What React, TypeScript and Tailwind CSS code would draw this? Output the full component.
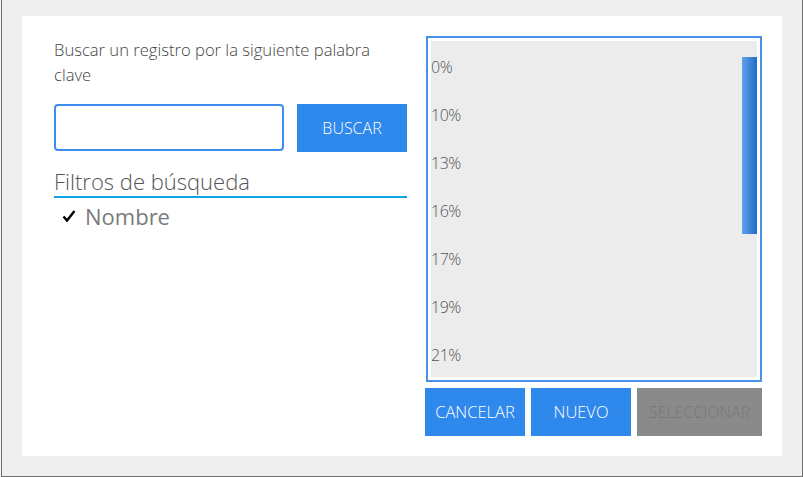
const items = ["0%", "10%", "13%", "16%", "17%", "19%", "21%"]

const Check = () => (
    <svg width="14" height="14" viewBox="0 0 14 14" className="shrink-0">
        <path d="M1.5 7.5 L5 11.5 L12.5 2" fill="none" stroke="#000" strokeWidth="2.4" />
    </svg>
)

const App = () => {
    return (
        <div className="w-[803px] h-[477px] bg-[#f5f5f5] pl-[1px] font-['Open_Sans',sans-serif]">
            <div className="h-full border-l border-r border-b border-[#6e6e6e] bg-[#efefef] pl-[20px] pt-[16px] pr-[19px] pb-[19px]">
                <div className="h-[440px] w-[760px] bg-white flex pl-[32px] pt-[20px] pr-[20px] pb-[20px] gap-[18px]">
                    {/* left column */}
                    <div className="w-[353px] flex flex-col">
                        <p className="text-[16.6px] leading-[25px] font-light text-[#444] pt-[1px] pr-[20px]">
                            Buscar un registro por la siguiente palabra clave
                        </p>
                        <div className="flex gap-[13px] mt-[17px]">
                            <input className="w-[230px] h-[47px] border-2 border-[#3d8cf0] rounded-[4px] outline-none px-2" />
                            <button className="w-[110px] h-[48px] bg-[#2f88ec] text-white font-light text-[16px]">BUSCAR</button>
                        </div>
                        <div className="mt-[16px] border-b-2 border-[#10a3e2] text-[22px] leading-[26px] font-light text-[#555] pb-[2px]">
                            Filtros de búsqueda
                        </div>
                        <div className="flex items-center gap-[9px] pl-[8px] mt-[4px] h-[28px]">
                            <Check />
                            <span className="text-[22px] leading-[28px] text-[#7a7a7a]">Nombre</span>
                        </div>
                    </div>
                    {/* right column */}
                    <div className="w-[337px] flex flex-col">
                        <div className="ml-[1px] h-[346px] border-2 border-[#4a8fe8] p-[3px] bg-white">
                            <div className="h-full bg-[#ebeceb] flex overflow-hidden">
                                <div className="flex-1 pt-[2px]">
                                    {items.map((item) => (
                                        <div key={item} className="h-[48px] flex items-center text-[16px] font-light text-[#555] tracking-[-0.5px]">
                                            {item}
                                        </div>
                                    ))}
                                </div>
                                <div className="w-[15px] pt-[16px]">
                                    <div className="h-[177px] bg-gradient-to-r from-[#5ea3ea] to-[#1d6dc6]"></div>
                                </div>
                            </div>
                        </div>
                        <div className="flex gap-[6px] mt-[6px]">
                            <button className="w-[100px] h-[48px] bg-[#2f88ec] text-white font-light text-[16.5px]">CANCELAR</button>
                            <button className="w-[100px] h-[48px] bg-[#2f88ec] text-white font-light text-[16.5px]">NUEVO</button>
                            <button className="w-[125px] h-[48px] bg-[#8a8a8a] text-[#777] font-light text-[16px]">SELECCIONAR</button>
                        </div>
                    </div>
                </div>
            </div>
        </div>
    )
}
export default App
